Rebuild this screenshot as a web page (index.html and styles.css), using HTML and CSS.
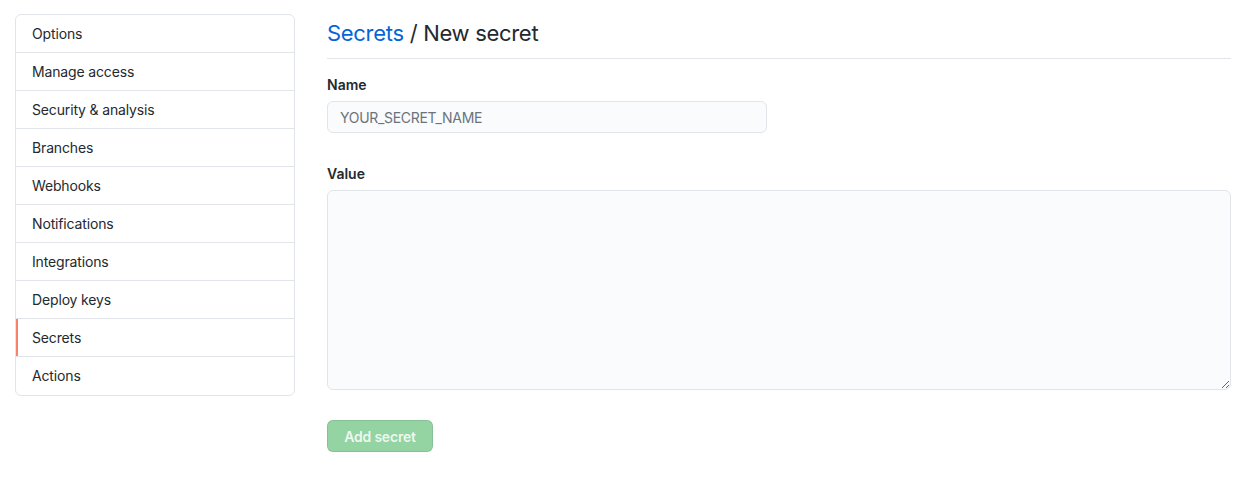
FILE: index.html
```html
<!DOCTYPE html>
<html>
<head>
<meta charset="utf-8">
<link rel="stylesheet" href="styles.css">
</head>
<body>
<div class="layout">
  <nav class="menu">
    <a class="menu-item">Options</a>
    <a class="menu-item">Manage access</a>
    <a class="menu-item">Security &amp; analysis</a>
    <a class="menu-item">Branches</a>
    <a class="menu-item">Webhooks</a>
    <a class="menu-item">Notifications</a>
    <a class="menu-item">Integrations</a>
    <a class="menu-item">Deploy keys</a>
    <a class="menu-item selected">Secrets</a>
    <a class="menu-item">Actions</a>
  </nav>
  <main class="content">
    <div class="subhead">
      <h2 class="subhead-heading"><a class="crumb">Secrets</a> / New secret</h2>
    </div>
    <form class="form">
      <div class="form-group">
        <label class="label">Name</label>
        <input class="input" type="text" placeholder="YOUR_SECRET_NAME">
      </div>
      <div class="form-group">
        <label class="label">Value</label>
        <textarea class="textarea"></textarea>
      </div>
      <button class="btn" type="button" disabled>Add secret</button>
    </form>
  </main>
</div>
</body>
</html>
```
FILE: styles.css
```css
html, body {
  margin: 0;
  padding: 0;
  background: #fff;
}
body {
  font-family: Inter, "Liberation Sans", sans-serif;
  font-size: 14px;
  line-height: 1.5;
  color: #24292e;
}
.layout {
  display: flex;
  gap: 32px;
  padding: 14px 22px 0 15px;
}
.menu {
  box-sizing: border-box;
  width: 280px;
  flex: none;
  align-self: flex-start;
  border: 1px solid #e1e4e8;
  border-radius: 6px;
  display: flex;
  flex-direction: column;
  overflow: hidden;
}
.menu-item {
  display: block;
  height: 37px;
  line-height: 37px;
  padding: 0 16px;
  border-bottom: 1px solid #e1e4e8;
  color: #24292e;
  font-size: 14px;
  letter-spacing: -0.15px;
}
.menu-item:last-child {
  border-bottom: none;
  height: 38px;
}
.menu-item.selected {
  box-shadow: inset 2px 0 0 #f9826c;
}
.content {
  flex: 1;
  min-width: 0;
}
.subhead {
  border-bottom: 1px solid #e1e4e8;
  padding: 4px 0 9px;
  margin-bottom: 15px;
}
.subhead-heading {
  margin: 0;
  font-size: 22px;
  font-weight: 400;
  line-height: 31px;
  letter-spacing: -0.3px;
}
.crumb {
  color: #0366d6;
}
.form {
  display: flex;
  flex-direction: column;
  align-items: flex-start;
}
.form-group {
  margin-bottom: 30px;
  width: 100%;
}
.label {
  display: block;
  font-weight: 600;
  font-size: 14px;
  line-height: 21px;
  margin-bottom: 6px;
}
.input, .textarea {
  box-sizing: border-box;
  font-family: Inter, "Liberation Sans", sans-serif;
  font-size: 14px;
  color: #24292e;
  background: #fafbfc;
  border: 1px solid #e1e4e8;
  border-radius: 6px;
  outline: none;
}
.input {
  width: 440px;
  height: 32px;
  padding: 5px 12px;
}
.input::placeholder {
  color: #6a737d;
  letter-spacing: -0.3px;
}
.textarea {
  display: block;
  width: 100%;
  height: 200px;
  padding: 8px 12px;
  resize: vertical;
}
.btn {
  box-sizing: border-box;
  font-family: Inter, "Liberation Sans", sans-serif;
  font-size: 14px;
  font-weight: 600;
  white-space: nowrap;
  height: 32px;
  width: 106px;
  padding: 0;
  letter-spacing: -0.2px;
  color: rgba(255,255,255,0.85);
  background: #94d3a2;
  border: 1px solid rgba(27,31,35,0.1);
  border-radius: 6px;
}
```
